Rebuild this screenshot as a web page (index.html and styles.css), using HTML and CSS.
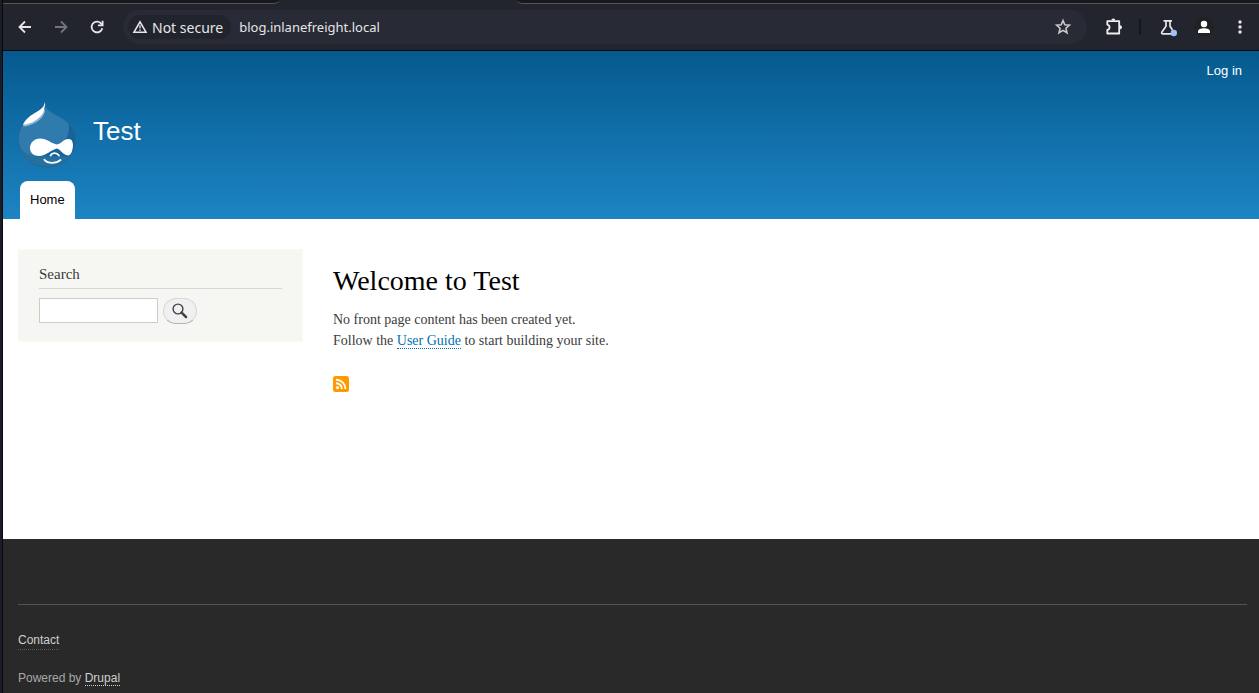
FILE: index.html
```html
<!DOCTYPE html>
<html lang="en">
<head>
<meta charset="utf-8">
<title>Welcome to Test | Test</title>
<link rel="stylesheet" href="styles.css">
</head>
<body>
<div class="window">
  <div class="tab-strip">
    <span class="tab-edge tab-edge-left"></span>
    <span class="tab-edge tab-edge-right"></span>
  </div>
  <div class="toolbar">
    <button class="tool" aria-label="Back"><svg width="16" height="16" viewBox="0 0 16 16" fill="none" stroke="#e6e6e8" stroke-width="1.8"><path d="M14 8H3M8 2.500L2.500 8L8 13.500"/></svg></button>
    <button class="tool" aria-label="Forward"><svg width="16" height="16" viewBox="0 0 16 16" fill="none" stroke="#74757a" stroke-width="1.800"><path d="M2 8H13M8 2.500L13.500 8L8 13.500"/></svg></button>
    <button class="tool" aria-label="Reload"><svg width="16" height="16" viewBox="0 0 16 16" fill="none" stroke="#e6e6e8" stroke-width="1.800"><path d="M13.300 9.200A5.400 5.400 0 1 1 12 4.300L13.400 5.800"/><path d="M13.600 1.800V6.300H9"/></svg></button>
    <div class="address">
      <button class="security">
        <svg width="16" height="16" viewBox="0 0 16 16"><path d="M8 2.800L14 13.200H2Z" fill="none" stroke="#e6e6e8" stroke-width="1.600"/><path d="M8 6.200V9.500M8 10.600V12" stroke="#e6e6e8" stroke-width="1.300"/></svg>
        <span>Not secure</span>
      </button>
      <input class="url" type="text" value="blog.inlanefreight.local" aria-label="Address">
      <button class="star" aria-label="Bookmark"><svg width="18" height="18" viewBox="0 0 18 18" fill="none" stroke="#c8c9cb" stroke-width="1.600"><path d="M9 2.500L10.800 6.700L15.400 7.100L11.900 10.200L13 14.800L9 12.400L5 14.800L6.100 10.200L2.600 7.100L7.200 6.700Z"/></svg></button>
    </div>
    <button class="extensions" aria-label="Extensions"><svg width="20" height="20" viewBox="0 0 20 20"><path d="M3.300 4.200H15.200V16.500H3.300V13C6.300 12.500 6.300 8.200 3.300 7.700Z" fill="none" stroke="#eeeeef" stroke-width="1.800" stroke-linejoin="round"/><path d="M7.300 3.500A2 2 0 0 1 11.300 3.500ZM16 8.300A2 2 0 0 1 16 12.300Z" fill="#eeeeef"/></svg></button>
    <span class="divider"></span>
    <button class="labs" aria-label="Experiments"><svg width="20" height="20" viewBox="0 0 20 20"><path d="M5.500 3.800H14M8 4V9.300L3.800 15.200Q3.200 16.800 5 16.800H13M12 4V9.300L14.500 13" fill="none" stroke="#e6e6e8" stroke-width="1.700"/><circle cx="15.800" cy="16" r="3.200" fill="#9fc0f8"/></svg></button>
    <button class="profile" aria-label="Profile"><svg width="20" height="20" viewBox="0 0 20 20"><circle cx="10" cy="10" r="10" fill="#202221"/><circle cx="10" cy="7" r="3.200" fill="#fff"/><path d="M4 16V14.500C4 10.300 16 10.300 16 14.500V16Z" fill="#fff"/></svg></button>
    <button class="menu" aria-label="Menu"><svg width="6" height="16" viewBox="0 0 6 16" fill="#e6e6e8"><circle cx="3" cy="3" r="1.700"/><circle cx="3" cy="8" r="1.700"/><circle cx="3" cy="13" r="1.700"/></svg></button>
  </div>

  <div class="page">
    <header class="header">
      <nav class="account"><a href="#login">Log in</a></nav>
      <div class="branding">
        <a class="logo" href="#home" aria-label="Home page">
          <svg width="58" height="66" viewBox="0 0 58 66">
            <defs><clipPath id="drop"><path d="M26.500 .5C28 8.500 34 10.500 42 15C51 20 57.500 27 57.500 37C57.500 54 45 65 29 65C12 65 .5 53 .5 37C.5 26 7 17 15.500 12C22 8.500 26 6 26.500 .5Z"/></clipPath></defs>
            <g clip-path="url(#drop)">
              <path fill="#2f7bad" d="M0 0H58V66H0Z"/>
              <path fill="#15639a" d="M50 19C54 35 44 48 22 53C12 55 4 53 1 46V66H58V24Z"/>
              <path fill="#26709f" d="M0 42C9 61 30 52 58 55V66H0Z"/>
            </g>
            <path fill="none" stroke="#286490" stroke-width=".8" d="M26.500 1C28 8.500 34 10.500 42 15C51 20 57.500 27 57.500 37C57.500 54 45 65 29 65C12 65 .5 53 .5 37C.5 26 7 17 15.500 12"/>
            <path fill="#8fbad6" d="M5 24.500C13 24.500 25 18 27 9.500L26 6L8 18Z"/>
            <path fill="#fff" d="M26.700 0C26.500 5.500 22 8 16 11.500C11 14.500 7 18 4.800 22.800C13 22.500 22 16.500 25 11C26.500 8 26 5 27.200 2.500Z"/>
            <path fill="#fff" d="M22 36.500C29 36.500 34 42 39 42.500C43 42 46 37 50 37C54 36.500 55 40 55 44C54.500 49 53 53.500 50 53.500C45 53 42 47 39 46.500C34 47 28 54 21 54C16 54 12 51 12 46C12 41 16 36.500 22 36.500Z"/>
            <path fill="none" stroke="#fff" stroke-width="1.800" stroke-linecap="round" d="M32.500 53.500C34 50.500 38.500 50 41 53.500M26.500 57.800C30 61.800 38 61.800 42.500 58"/>
          </svg>
        </a>
        <a class="site-name" href="#home">Test</a>
      </div>
      <nav class="main-menu"><a href="#home">Home</a></nav>
    </header>

    <div class="columns">
      <aside class="sidebar">
        <h2><label for="keys">Search</label></h2>
        <form class="search">
          <input id="keys" type="search">
          <button type="submit" aria-label="Search"><svg width="16" height="16" viewBox="0 0 16 16" fill="none" stroke="#444"><circle cx="6" cy="6" r="4.900" stroke-width="1.400"/><path d="M9.600 9.600L14 14" stroke-width="2.500" stroke-linecap="round"/></svg></button>
        </form>
      </aside>
      <main class="content">
        <h1>Welcome to Test</h1>
        <p>No front page content has been created yet.<br>Follow the <a href="#guide">User Guide</a> to start building your site.</p>
        <a class="feed" href="#rss" aria-label="Subscribe"><svg width="16" height="16" viewBox="0 0 16 16"><rect width="16" height="16" rx="2.500" fill="#ff9900"/><circle cx="4.500" cy="11.600" r="1.600" fill="#fff"/><path d="M3 7.200A5.900 5.900 0 0 1 8.900 13.100M3 3.700A9.400 9.400 0 0 1 12.400 13.100" fill="none" stroke="#fff" stroke-width="1.900"/></svg></a>
      </main>
    </div>

    <footer class="footer">
      <div class="footer-inner">
        <nav><a class="contact" href="#contact">Contact</a></nav>
        <p>Powered by <a class="powered" href="#drupal">Drupal</a></p>
      </div>
    </footer>
  </div>
</div>
</body>
</html>
```
FILE: styles.css
```css
* { box-sizing: border-box; }
body { margin: 0; background: #1b1d26; }
button { padding: 0; border: 0; background: none; display: flex; align-items: center; justify-content: center; }
a { text-decoration: none; }
svg { display: block; flex: none; }

.window { min-height: 100vh; margin-left: 2px; border-left: 1px solid #08090d; display: flex; flex-direction: column; background: #23252e; }
.tab-strip { display: flex; height: 4px; gap: 236px; }
.tab-edge { background: #17181c; border-bottom: 1px solid #55565b; }
.tab-edge-left { width: 277px; border-bottom-right-radius: 8px 4px; }
.tab-edge-right { flex: 1; border-bottom-left-radius: 8px 4px; }

.toolbar { display: flex; align-items: center; height: 47px; padding: 0 9px 0 4px; border-bottom: 1px solid #0a0b0e; color: #e6e6e8; }
.tool { width: 36px; height: 34px; }
.address { flex: 1; display: flex; align-items: center; height: 34px; margin-left: 8px; padding: 0 15px 0 5px; border-radius: 17px; background: #282a35; }
.security { gap: 4px; height: 24px; padding: 0 8px 0 4px; border-radius: 12px; background: #22242d; color: #e6e6e8; font: 14px "Noto Sans", sans-serif; }
.url { flex: 1; min-width: 0; margin-left: 8px; padding: 0; border: 0; background: none; color: #e6e6e8; font: 13px "Noto Sans", sans-serif; outline: 0; }
.extensions { margin-left: 17px; }
.divider { width: 2px; height: 16px; margin: 0 17px 0 15px; background: #17181c; }
.profile { margin: 0 16px; }
.menu { width: 20px; }

.page { flex: 1; display: flex; flex-direction: column; background: #fff; }
.header { display: flex; flex-direction: column; padding: 0 15px; background: linear-gradient(#055a8e, #1d84c3); font-family: "Liberation Sans", sans-serif; }
.header a { color: #fff; }
.account { padding: 10px 2px 0; text-align: right; font-size: 13px; line-height: 20px; }
.branding { display: flex; align-items: flex-start; gap: 17px; padding: 21px 0 13px; }
.site-name { padding-top: 14px; font-size: 26px; line-height: 30px; }
.main-menu { display: flex; padding-left: 2px; }
.main-menu a { height: 38px; padding: 0 10px; border-radius: 8px 8px 0 0; background: #fff; color: #000; font-size: 13px; line-height: 38px; }

.columns { flex: 1; display: flex; align-items: flex-start; gap: 30px; padding: 30px 15px; font-family: "Liberation Serif", serif; color: #3b3b3b; }
.sidebar { width: 285px; padding: 15px 20px 17px 21px; border: 1px solid #f9f9f5; border-width: 1px 1px 1px 0; background: #f6f6f2; }
.sidebar h2 { margin: 0 0 9px; padding-bottom: 5px; border-bottom: 1px solid #d6d6d6; font-size: 15px; font-weight: normal; line-height: 18px; }
.search { display: flex; gap: 5px; }
.search input { width: 119px; height: 25px; margin: 0; padding: 2px; border: 1px solid #ccc; border-radius: 0; background: #fff; appearance: none; }
.search button { width: 34px; height: 26px; border: 1px solid #d8d8d8; border-bottom-color: #b4b4b4; border-radius: 13px; background: #f0f0f0; }
.content { flex: 1; padding-top: 15px; font-size: 14px; line-height: 21px; }
.content h1 { margin: 0 0 11px; color: #000; font-size: 28px; font-weight: normal; line-height: 34px; }
.content p { margin: 0 0 25px; }
.content p a { color: #0071b3; border-bottom: 1px dotted #0071b3; }
.feed { display: inline-block; }

.footer { padding: 65px 12px 0 15px; background: #292929; color: #a8a8a8; font: 12px/18px "Liberation Sans", sans-serif; }
.footer-inner { padding: 26px 0 6px; border-top: 1px solid #555; }
.footer a { color: #d0d0d0; }
.footer .contact { display: inline-block; border-bottom: 1px dotted #5a5a5a; }
.footer p { margin: 19px 0 0; }
.footer .powered { border-bottom: 1px dotted #d0d0d0; }
```
